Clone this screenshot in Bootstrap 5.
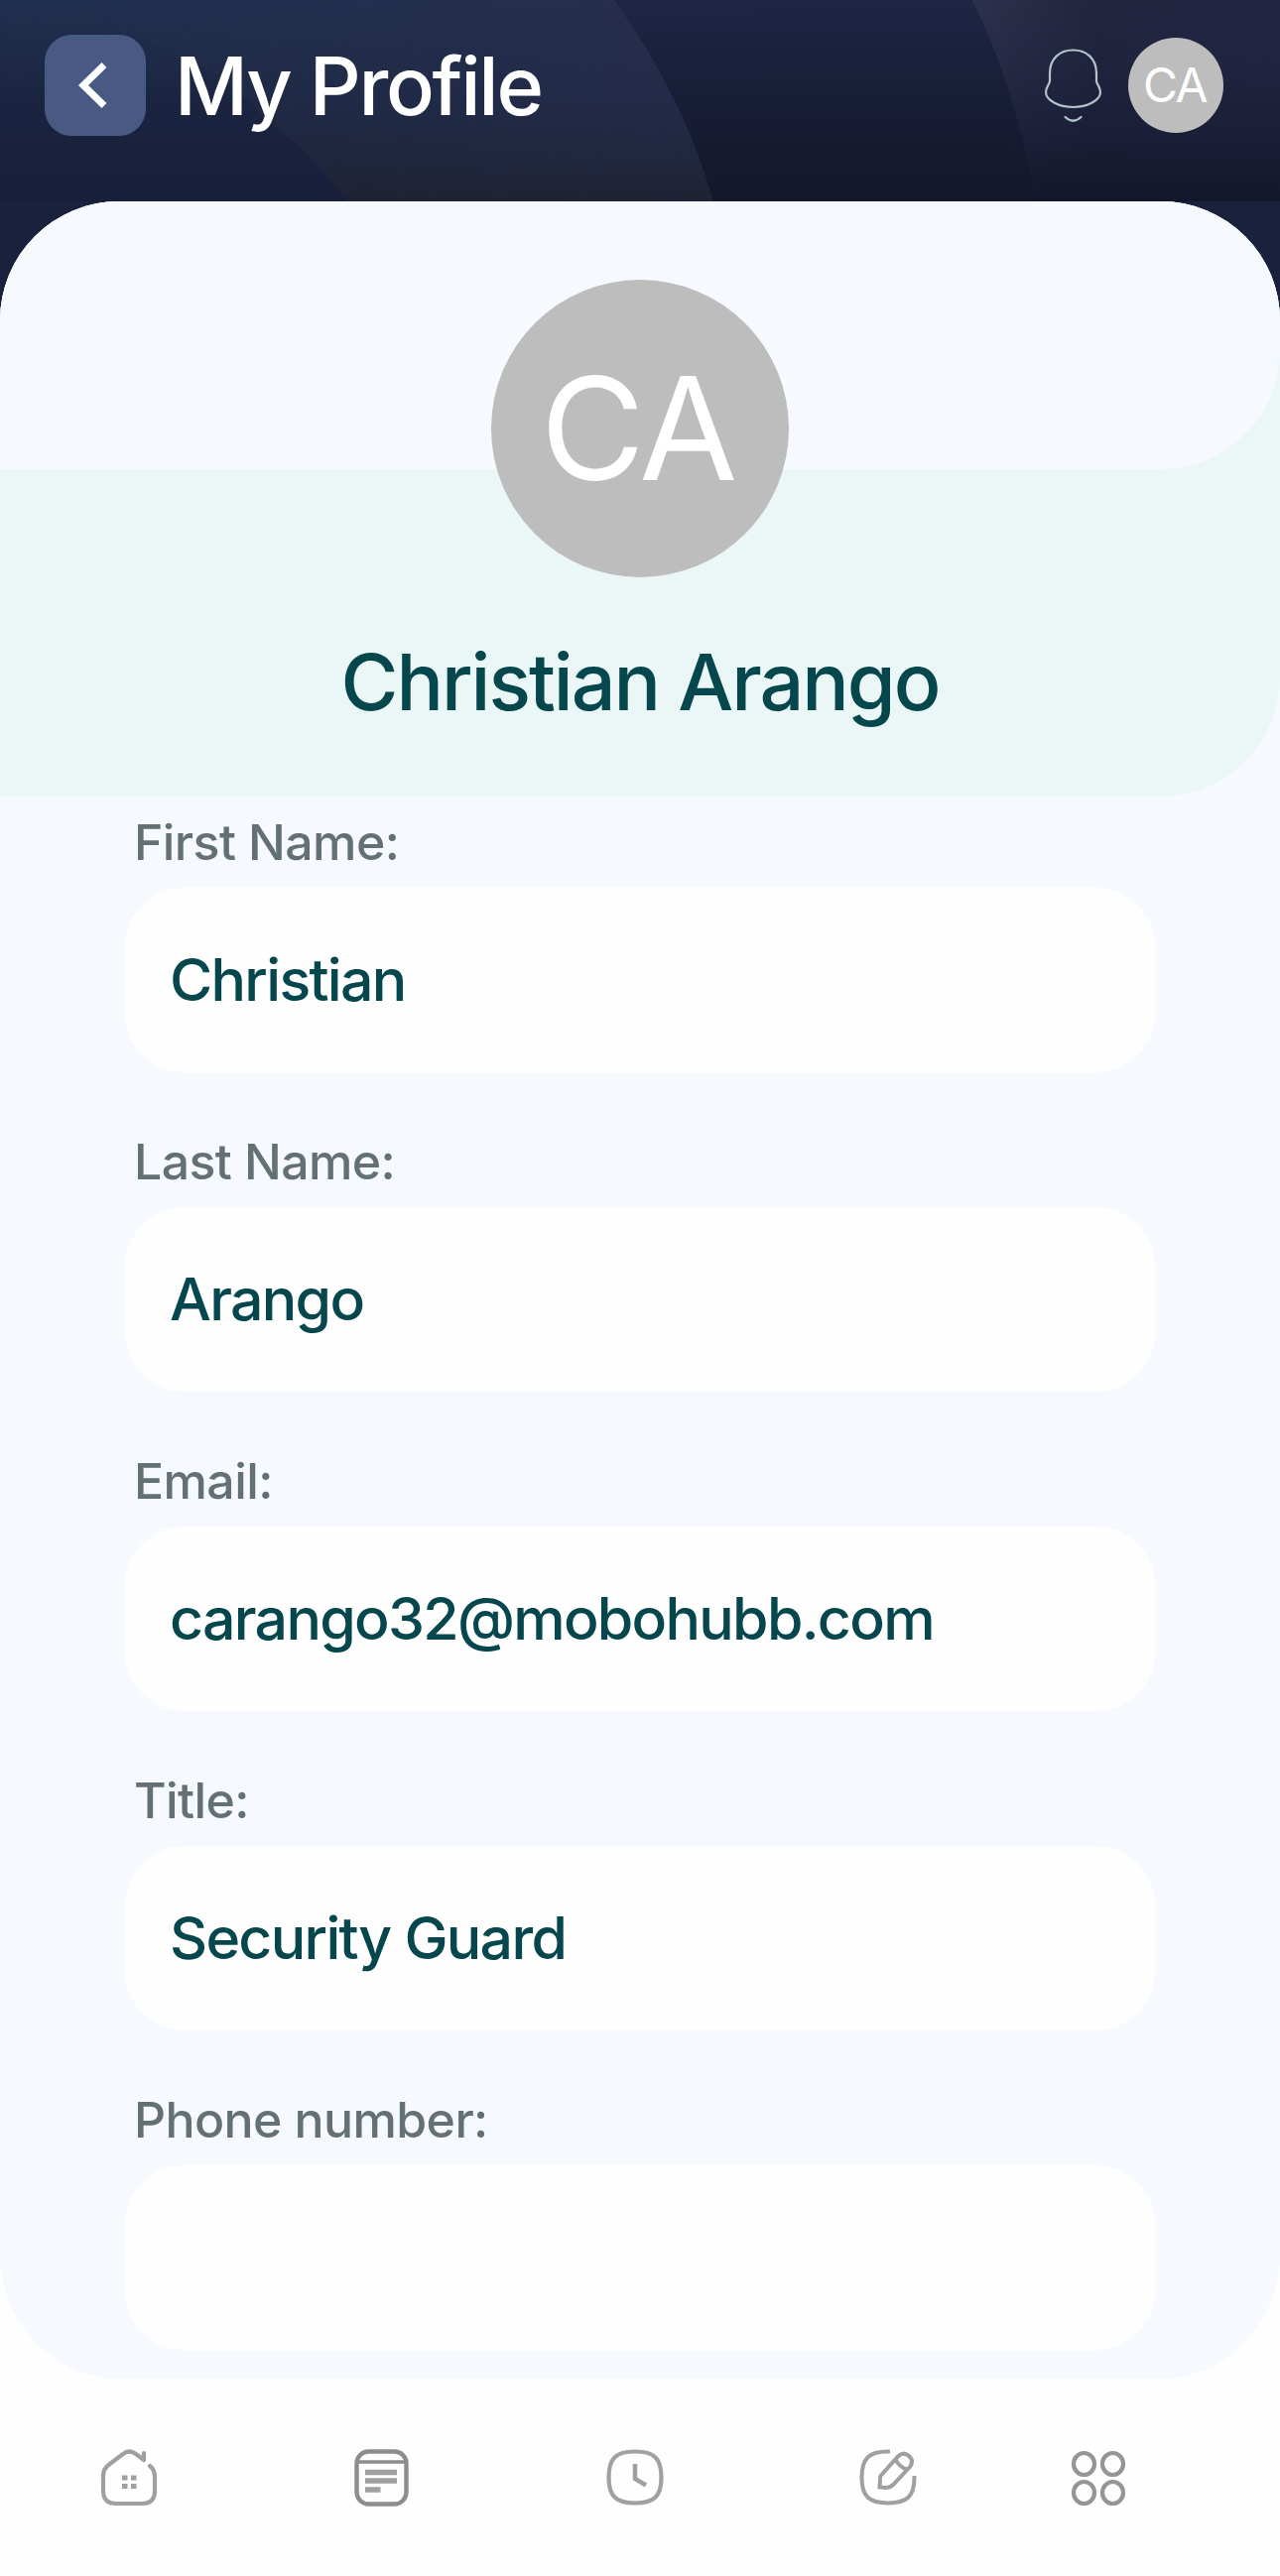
<!DOCTYPE html>
<html lang="en">
<head>
<meta charset="utf-8">
<meta name="viewport" content="width=device-width, initial-scale=1">
<title>My Profile</title>
<link href="https://cdn.jsdelivr.net/npm/bootstrap@5.3.0/dist/css/bootstrap.min.css" rel="stylesheet">
<style>
  body { font-family: Inter, "Liberation Sans", sans-serif; background: #fefefe; color: #05474c; overflow-x: hidden; }
  .screen { height: 2597px; }
  .topbar { height: 203px; padding: 35px 57px 0 45px; background: #1a213c; }
  .topbar-art { left: 0; top: 0; width: 100%; height: 203px; }
  .back-btn { width: 102px; height: 102px; border-radius: 27px; background: #485983; border: 0; }
  .page-title { font-size: 81px; line-height: 104px; font-weight: 500; color: #fff; margin-left: 29px; letter-spacing: -2.3px; }
  .user-chip { width: 96px; height: 96px; font-size: 48px; background: #bdbdbd; letter-spacing: -1.5px; padding-right: 2px; }
  .bell { margin-right: 26px; }
  .topbar-tools { padding-top: 3px; }
  .backdrop { background: linear-gradient(#1a213c 0 50%, #fefefe 50%); }
  .sheet { height: 2196px; background: #f6f9fe; border-radius: 120px 120px 125px 125px; }
  .hero { height: 600px; background: #ebf7f7; border-bottom-right-radius: 120px; }
  .hero-top { height: 270px; background: #f6f9fe; border-bottom-right-radius: 120px; padding-top: 79px; }
  .portrait { width: 300px; height: 300px; font-size: 144px; background: #bdbdbd; letter-spacing: -3px; padding-right: 5px; flex: none; }
  .person { font-size: 79px; line-height: 100px; font-weight: 500; margin-top: 164px; letter-spacing: -2px; }
  .fields { padding: 16px 126px 0; }
  .field { height: 322px; }
  .field-label { font-size: 50px; line-height: 60px; color: #647173; font-weight: 500; margin: 0 0 16px 9px; letter-spacing: -.6px; }
  .field-box { height: 186px; border: 0; border-radius: 60px; background: #fefefe; color: #05474c; font-size: 59px; font-weight: 500; padding: 0 45px; letter-spacing: -1.7px; }
  .tabs { height: 198px; padding: 0 98px 1px 2px; background: #fefefe; }
  .tab-cell { width: 255px; }
  .tab-last { width: 170px; }
</style>
<script src="https://cdn.jsdelivr.net/npm/bootstrap@5.3.0/dist/js/bootstrap.bundle.min.js"></script>
</head>
<body>
<div class="screen d-flex flex-column overflow-hidden">
  <header class="topbar position-relative d-flex align-items-start">
    <svg class="topbar-art position-absolute" viewBox="0 0 1290 203" preserveAspectRatio="none" aria-hidden="true">
      <defs>
        <linearGradient id="base" x1="0" y1="0" x2="0" y2="1"><stop offset="0" stop-color="#1e2644"/><stop offset=".45" stop-color="#191e38"/><stop offset="1" stop-color="#13172a"/></linearGradient>
        <linearGradient id="band" x1="0" y1="0" x2="0" y2="1"><stop offset="0" stop-color="#20304f"/><stop offset=".5" stop-color="#1f2944"/><stop offset="1" stop-color="#1f2335"/></linearGradient>
        <linearGradient id="glow" x1="0" y1="0" x2="1" y2="0"><stop offset="0" stop-color="#20304f" stop-opacity="0"/><stop offset="1" stop-color="#292d4c"/></linearGradient>
        <linearGradient id="fade" x1="0" y1="0" x2="0" y2="1"><stop offset="0" stop-color="#fff"/><stop offset="1" stop-color="#000"/></linearGradient>
        <linearGradient id="orb" x1="0" y1="0" x2="0" y2="1"><stop offset="0" stop-color="#1d2c4a" stop-opacity="0"/><stop offset=".5" stop-color="#1a2440"/><stop offset="1" stop-color="#191e39"/></linearGradient>
        <linearGradient id="ray" x1="0" y1="0" x2="1" y2="0"><stop offset="0" stop-color="#2e314c"/><stop offset=".4" stop-color="#22253f"/><stop offset="1" stop-color="#232642"/></linearGradient>
        <mask id="down"><rect width="1290" height="203" fill="url(#fade)"/></mask>
      </defs>
      <rect width="1290" height="203" fill="url(#base)"/>
      <path d="M0 0H619Q690 100 719 203H0Z" fill="url(#band)"/>
      <path d="M0 0H619Q690 100 719 203H0Z" fill="url(#glow)" mask="url(#down)"/>
      <path d="M0 10Q180 20 270 122Q318 158 350 203H0Z" fill="url(#orb)"/>
      <path d="M980 0Q1024 90 1044 203H1290V0Z" fill="url(#ray)" mask="url(#down)"/>
    </svg>
    <button class="back-btn btn p-0 position-relative d-flex align-items-center justify-content-center" aria-label="Back">
      <svg width="102" height="102" viewBox="0 0 102 102" fill="none"><path d="M60 30.500 39 51 60 71.500" stroke="#fff" stroke-width="7"/></svg>
    </button>
    <h1 class="page-title mb-0 position-relative">My Profile</h1>
    <div class="topbar-tools ms-auto d-flex position-relative">
      <svg class="bell" width="60" height="96" viewBox="1051 38 60 96" fill="none" stroke="#b4c3c9" stroke-width="2.200" stroke-linecap="round">
        <path d="M1058 82V74C1058 59 1068 50.500 1081.500 50.500S1105 59 1105 74V82C1106 86 1109 88 1109 93C1109 101 1096 108 1081.500 108S1054 101 1054 93C1054 88 1057 86 1058 82Z"/>
        <path d="M1073.500 118Q1081.500 125.500 1089.500 118"/>
      </svg>
      <div class="user-chip rounded-circle text-white d-flex align-items-center justify-content-center">CA</div>
    </div>
  </header>

  <div class="backdrop">
    <main class="sheet overflow-hidden">
      <section class="hero">
        <div class="hero-top d-flex flex-column align-items-center">
          <div class="portrait rounded-circle text-white d-flex align-items-center justify-content-center">CA</div>
        </div>
        <h2 class="person text-center mb-0">Christian Arango</h2>
      </section>
      <section class="fields">
        <div class="field"><div class="field-label">First Name:</div><div class="form-control field-box d-flex align-items-center">Christian</div></div>
        <div class="field"><div class="field-label">Last Name:</div><div class="form-control field-box d-flex align-items-center">Arango</div></div>
        <div class="field"><div class="field-label">Email:</div><div class="form-control field-box d-flex align-items-center">carango32@mobohubb.com</div></div>
        <div class="field"><div class="field-label">Title:</div><div class="form-control field-box d-flex align-items-center">Security Guard</div></div>
        <div class="field"><div class="field-label">Phone number:</div><div class="form-control field-box d-flex align-items-center"></div></div>
      </section>
    </main>
  </div>

  <nav class="tabs d-flex align-items-center" aria-label="Main">
    <a class="tab-cell d-flex justify-content-center" href="#" aria-label="Home">
      <svg width="58" height="58" viewBox="0 0 58 58" fill="none" stroke="#a0a0a0" stroke-width="4.200" stroke-linecap="round" stroke-linejoin="round">
        <path d="M50 17Q55 21 55 28V42Q55 55 42 55H16Q3 55 3 42V27Q3 20 9 15.500L23 5Q29 0 36 5L44 11V4"/>
        <path d="M22 29h5.500M31 29h5.500M22 37.500h5.500M31 37.500h5.500" stroke-width="5" stroke-linecap="butt"/>
      </svg>
    </a>
    <a class="tab-cell d-flex justify-content-center" href="#" aria-label="Notes">
      <svg width="58" height="58" viewBox="0 0 58 58" fill="none" stroke="#8d8d8d" stroke-width="4.400">
        <rect x="3.500" y="2.500" width="50" height="53" rx="12"/>
        <path d="M4 13H54" stroke-width="3.400"/>
        <path d="M12 23.500H44M12 32H44M12 41H27.500" stroke="#a0a0a0" stroke-width="5.500"/>
      </svg>
    </a>
    <a class="tab-cell d-flex justify-content-center" href="#" aria-label="Clock">
      <svg width="58" height="58" viewBox="0 0 58 58" fill="none" stroke="#a0a0a0" stroke-width="4.200">
        <path d="M29 2.500C48 2.500 55.500 9 55.500 28.500S48 54.500 29 54.500 2.500 48 2.500 28.500 10 2.500 29 2.500Z"/>
        <path d="M29 15V30L40 36.500" stroke-width="4.500"/>
      </svg>
    </a>
    <a class="tab-cell d-flex justify-content-center" href="#" aria-label="Edit">
      <svg width="58" height="58" viewBox="0 0 58 58" fill="none" stroke="#a0a0a0" stroke-width="4">
        <path d="M31 2.500H29C10 2.500 2.500 9 2.500 28.500S10 54.500 29 54.500 55.500 48 55.500 28.500V27"/>
        <path d="M21.500 27 39 7.500Q44.500 2 50 7T51 18L34 36Q31 39 27 39L20.500 38.500 21 31Q21 28 21.500 27ZM36.500 10.500Q40 18 48 20.500"/>
      </svg>
    </a>
    <a class="tab-last d-flex justify-content-center" href="#" aria-label="Menu">
      <svg width="58" height="58" viewBox="-1 -2 58 58" fill="none" stroke="#959595" stroke-width="4.200">
        <ellipse cx="13.500" cy="13" rx="10.500" ry="11"/><ellipse cx="42.500" cy="13" rx="10.500" ry="11"/><ellipse cx="13.500" cy="42" rx="10.500" ry="11"/><ellipse cx="42.500" cy="42" rx="10.500" ry="11"/>
      </svg>
    </a>
  </nav>
</div>
</body>
</html>
